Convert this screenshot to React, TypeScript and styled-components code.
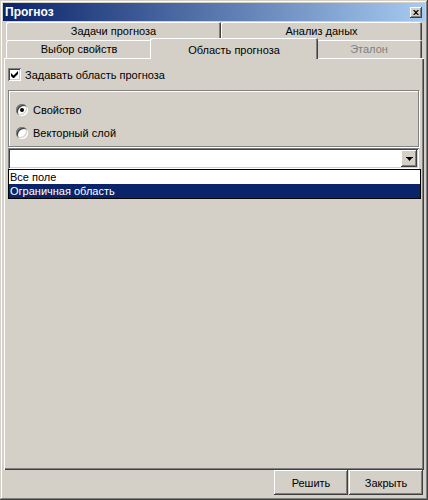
import React from 'react';
import styled, { createGlobalStyle, css } from 'styled-components';

const GlobalStyle = createGlobalStyle`
  html, body {
    margin: 0;
    padding: 0;
    background: #d4d0c8;
  }

  body {
    font-family: "Liberation Sans", Arial, sans-serif;
    font-size: 11px;
    color: #000;
  }

  * {
    box-sizing: border-box;
  }
`;

const raised = css`
  box-shadow: inset -1px -1px #404040, inset 1px 1px #fff, inset -2px -2px #808080;
`;

const sunken = css`
  box-shadow: inset 1px 1px #808080, inset -1px -1px #fff, inset 2px 2px #404040,
    inset -2px -2px #d4d0c8;
`;

const Window = styled.div`
  width: 428px;
  height: 500px;
  padding: 2px;
  background: #d4d0c8;
  display: flex;
  flex-direction: column;
  box-shadow: inset -1px -1px #404040, inset 1px 1px #d4d0c8, inset -2px -2px #808080,
    inset 2px 2px #fff;
`;

const TitleBar = styled.div`
  margin: 1px 1px 0;
  height: 18px;
  padding: 0 3px 0 2px;
  display: flex;
  align-items: center;
  justify-content: space-between;
  background: linear-gradient(to right, #0a246a, #a6caf0);
  color: #fff;
  font-weight: bold;
  font-size: 12px;
`;

const CloseButton = styled.div`
  width: 12px;
  height: 11px;
  background: #d4d0c8;
  display: flex;
  align-items: center;
  justify-content: center;
  ${raised};

  svg {
    display: block;
  }
`;

const TabStrip = styled.div`
  margin: 1px 4px 0;
  display: flex;
  flex-direction: column;
`;

const TabRow = styled.div`
  display: flex;
  height: 18px;
`;

const Tab = styled.div<{ $width: number; $selected?: boolean; $disabled?: boolean }>`
  flex: none;
  width: ${(p) => p.$width}px;
  display: flex;
  align-items: center;
  justify-content: center;
  background: #d4d0c8;
  border-radius: 2px 2px 0 0;
  box-shadow: inset 1px 1px #fff, inset -1px 0 #404040, inset -2px 0 #808080;
  color: ${(p) => (p.$disabled ? '#808080' : '#000')};
  white-space: nowrap;

  ${(p) =>
    p.$selected &&
    css`
      position: relative;
      z-index: 1;
      width: ${p.$width + 4}px;
      margin: -2px -2px -1px;
      padding-top: 3px;
    `}
`;

const Panel = styled.div`
  flex: 1;
  margin: 0 2px;
  padding: 10px 5px 0 4px;
  display: flex;
  flex-direction: column;
  box-shadow: inset 1px 1px #fff, inset -1px -1px #404040, inset -2px -2px #808080;
`;

const CheckRow = styled.label`
  display: flex;
  align-items: center;
  gap: 4px;
  height: 13px;
`;

const CheckBox = styled.span`
  width: 13px;
  height: 13px;
  flex: none;
  background: #fff;
  display: flex;
  align-items: center;
  justify-content: center;
  ${sunken};
`;

const GroupBox = styled.div`
  margin-top: 9px;
  width: 411px;
  height: 57px;
  padding: 13px 0 0 7px;
  border: 1px solid #808080;
  box-shadow: inset 1px 1px #fff, 1px 1px #fff;
  display: flex;
  flex-direction: column;
  gap: 11px;
`;

const RadioRow = styled.label`
  display: flex;
  align-items: center;
  gap: 5px;
  height: 12px;
`;

const Radio = styled.span<{ $checked?: boolean }>`
  position: relative;
  width: 12px;
  height: 12px;
  flex: none;
  border-radius: 50%;
  background: #fff;
  box-shadow: inset 1px 1px #808080, inset -1px -1px #fff, inset 2px 2px #404040,
    inset -2px -2px #d4d0c8;

  &::after {
    content: '';
    display: ${(p) => (p.$checked ? 'block' : 'none')};
    position: absolute;
    left: 4px;
    top: 4px;
    width: 4px;
    height: 4px;
    border-radius: 50%;
    background: #000;
  }
`;

const Combo = styled.div`
  margin-top: 1px;
  width: 411px;
  height: 21px;
  padding: 2px;
  background: #fff;
  display: flex;
  justify-content: flex-end;
  ${sunken};
`;

const DropButton = styled.div`
  width: 16px;
  height: 17px;
  background: #d4d0c8;
  display: flex;
  align-items: center;
  justify-content: center;
  ${raised};

  svg {
    display: block;
  }
`;

const List = styled.div`
  width: 413px;
  border: 1px solid #000;
  background: #fff;
`;

const ListItem = styled.div<{ $active?: boolean }>`
  height: 14px;
  line-height: 14px;
  padding-left: 1px;
  background: ${(p) => (p.$active ? '#0a246a' : '#fff')};
  color: ${(p) => (p.$active ? '#fff' : '#000')};
`;

const ButtonBar = styled.div`
  height: 25px;
  margin: 0 3px 3px 0;
  display: flex;
  justify-content: flex-end;
  gap: 1px;
`;

const Button = styled.div`
  width: 74px;
  height: 25px;
  display: flex;
  align-items: center;
  justify-content: center;
  background: #d4d0c8;
  ${raised};
`;

const App: React.FC = () => {
  return (
    <>
      <GlobalStyle />
      <Window>
        <TitleBar>
          <span>Прогноз</span>
          <CloseButton>
            <svg width="6" height="5" viewBox="0 0 6 5">
              <path d="M0 0h1.5L3 1.5 4.5 0H6L3.8 2.5 6 5H4.5L3 3.5 1.5 5H0l2.2-2.5z" fill="#000" />
            </svg>
          </CloseButton>
        </TitleBar>

        <TabStrip>
          <TabRow>
            <Tab $width={215}>Задачи прогноза</Tab>
            <Tab $width={201}>Анализ даных</Tab>
          </TabRow>
          <TabRow>
            <Tab $width={146}>Выбор свойств</Tab>
            <Tab $width={164} $selected>
              Область прогноза
            </Tab>
            <Tab $width={106} $disabled>
              Эталон
            </Tab>
          </TabRow>
        </TabStrip>

        <Panel>
          <CheckRow>
            <CheckBox>
              <svg width="7" height="7" viewBox="0 0 7 7">
                <path d="M0 2v3l2 2h1l4-4V0L2.5 4.5z" fill="#000" />
              </svg>
            </CheckBox>
            Задавать область прогноза
          </CheckRow>

          <GroupBox>
            <RadioRow>
              <Radio $checked />
              Свойство
            </RadioRow>
            <RadioRow>
              <Radio />
              Векторный слой
            </RadioRow>
          </GroupBox>

          <Combo>
            <DropButton>
              {/* classic combo arrow: a flat bar over a small wedge */}
              <svg width="7" height="4" viewBox="0 0 7 4">
                <path d="M0 0h7v1H6L3.5 4 1 1H0z" fill="#000" />
              </svg>
            </DropButton>
          </Combo>

          <List>
            <ListItem>Все поле</ListItem>
            <ListItem $active>Ограничная область</ListItem>
          </List>
        </Panel>

        <ButtonBar>
          <Button>Решить</Button>
          <Button>Закрыть</Button>
        </ButtonBar>
      </Window>
    </>
  );
};

export default App;
